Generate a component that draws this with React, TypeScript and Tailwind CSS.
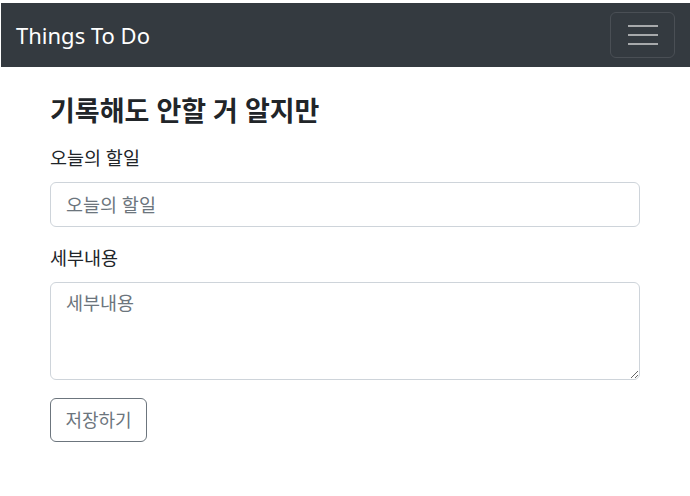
import React from 'react';

const kr = { fontFamily: '"Noto Sans", "Noto Sans CJK KR", sans-serif' };

const App: React.FC = () => {
  return (
    <div className="min-h-screen bg-white pt-[3px]" style={kr}>
      {/* navbar */}
      <nav className="ml-[1px] flex h-[64px] items-center justify-between bg-[#343a40] pl-[15px] pr-[15px]">
        <span className="text-[22px] leading-none text-white">Things To Do</span>
        <button className="flex h-[46px] w-[65px] flex-col items-center justify-center gap-[7px] rounded-[6px] border border-[#4a4f55]">
          <span className="block h-[2px] w-[30px] bg-[#a7a9ab]" />
          <span className="block h-[2px] w-[30px] bg-[#a7a9ab]" />
          <span className="block h-[2px] w-[30px] bg-[#a7a9ab]" />
        </button>
      </nav>

      <main className="mx-auto flex w-[590px] flex-col">
        <h2 className="mt-[28px] text-[27px] font-bold leading-[32px] text-[#212529]">
          기록해도 안할 거 알지만
        </h2>

        <label className="mt-[18px] text-[18.5px] leading-[26px] text-[#212529]">오늘의 할일</label>
        <input
          type="text"
          placeholder="오늘의 할일"
          className="mt-[11px] h-[45px] w-full rounded-[6px] border border-[#ced4da] px-[15px] text-[18.5px] text-[#212529] placeholder:text-[#6c757d] focus:outline-none"
        />

        <label className="mt-[18px] text-[18.5px] leading-[26px] text-[#212529]">세부내용</label>
        <textarea
          placeholder="세부내용"
          className="mt-[11px] h-[98px] w-full rounded-[6px] border border-[#ced4da] px-[15px] py-[6px] text-[18.5px] leading-[28px] text-[#212529] placeholder:text-[#6c757d] focus:outline-none"
        />

        <div className="mt-[18px]">
          <button className="h-[44px] w-[97px] rounded-[6px] border border-[#6c757d] text-[18px] text-[#6c757d]">
            저장하기
          </button>
        </div>
      </main>
    </div>
  );
};

export default App;
